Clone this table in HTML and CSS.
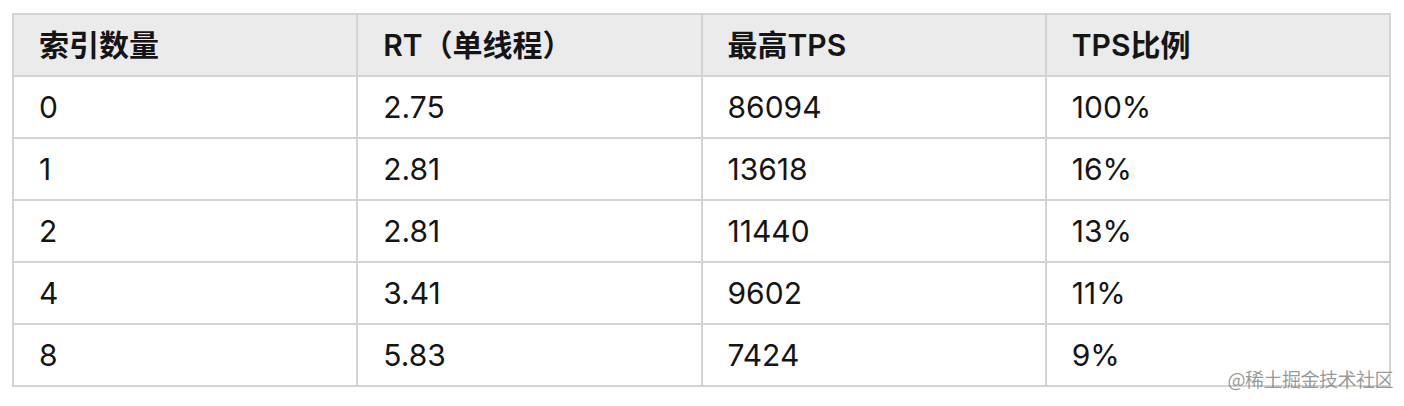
FILE: index.html
```html
<!DOCTYPE html>
<html lang="zh-CN">
<head>
<meta charset="utf-8">
<link rel="stylesheet" href="styles.css">
</head>
<body>
<div class="page">
  <table class="data">
    <thead>
      <tr><th>索引数量</th><th>RT（单线程）</th><th>最高TPS</th><th>TPS比例</th></tr>
    </thead>
    <tbody>
      <tr><td>0</td><td>2.75</td><td>86094</td><td>100%</td></tr>
      <tr><td>1</td><td>2.81</td><td>13618</td><td>16%</td></tr>
      <tr><td>2</td><td>2.81</td><td>11440</td><td>13%</td></tr>
      <tr><td>4</td><td>3.41</td><td>9602</td><td>11%</td></tr>
      <tr><td>8</td><td>5.83</td><td>7424</td><td>9%</td></tr>
    </tbody>
  </table>
  <div class="watermark">@稀土掘金技术社区</div>
</div>
</body>
</html>
```
FILE: styles.css
```css
html, body {
  margin: 0;
  padding: 0;
  background: #ffffff;
}
.page {
  position: relative;
  width: 1404px;
  height: 406px;
  padding: 13px 0 0 12px;
  box-sizing: border-box;
}
.data {
  border-collapse: collapse;
  table-layout: fixed;
  width: 1379px;
  font-family: "Inter", "Noto Sans CJK SC", sans-serif;
  font-size: 30px;
  color: #151515;
}
.data th, .data td {
  border: 2px solid #d3d3d3;
  height: 62px;
  padding: 0 0 0 25px;
  text-align: left;
  box-sizing: border-box;
  line-height: 1;
}
.data th {
  background: #ebebeb;
  font-weight: 600;
}
.data td {
  font-weight: 400;
}
.watermark {
  position: absolute;
  right: 11px;
  bottom: 14px;
  font-family: "Noto Sans CJK SC", sans-serif;
  font-size: 19px;
  color: rgba(120, 120, 120, 0.75);
  letter-spacing: -0.5px;
}
```
